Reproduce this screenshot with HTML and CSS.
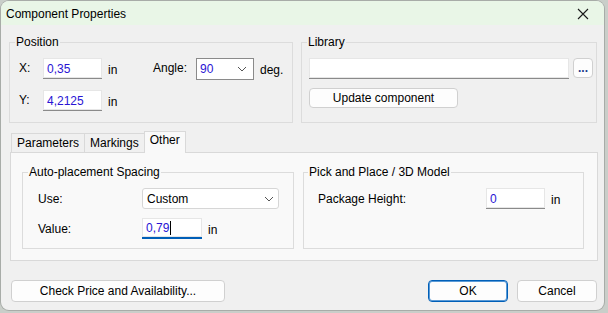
FILE: index.html
```html
<!DOCTYPE html>
<html lang="en">
<head>
    <meta charset="UTF-8">
    <title>Component Properties</title>
    <link rel="stylesheet" href="styles.css">
</head>
<body>
    <div class="window">
        <!-- Title bar -->
        <div class="titlebar">
            <span class="title">Component Properties</span>
            <svg class="close" width="12" height="12" viewBox="0 0 12 12">
                <path d="M1 1 L11 11 M11 1 L1 11" stroke="#1a1a1a" stroke-width="1.1"/>
            </svg>
        </div>

        <div class="content">
            <div class="top-row">
                <fieldset class="group group-position">
                    <legend>Position</legend>
                    <div class="pos-grid">
                        <span class="lbl">X:</span>
                        <input class="field" type="text" value="0,35">
                        <span class="unit">in</span>
                        <span class="lbl">Angle:</span>
                        <div class="combo">
                            <span class="combo-value">90</span>
                            <svg width="10" height="6" viewBox="0 0 10 6"><path d="M1 1 L5 5 L9 1" fill="none" stroke="#555" stroke-width="1"/></svg>
                        </div>
                        <span class="unit">deg.</span>

                        <span class="lbl">Y:</span>
                        <input class="field" type="text" value="4,2125">
                        <span class="unit">in</span>
                    </div>
                </fieldset>

                <fieldset class="group group-library">
                    <legend>Library</legend>
                    <div class="lib-body">
                        <div class="lib-row">
                            <input class="field lib-field" type="text" value="">
                            <button class="btn btn-dots">...</button>
                        </div>
                        <button class="btn btn-update">Update component</button>
                    </div>
                </fieldset>
            </div>

            <!-- Tabs -->
            <div class="tabs">
                <div class="tab">Parameters</div>
                <div class="tab">Markings</div>
                <div class="tab active">Other</div>
            </div>
            <div class="panel">
                <fieldset class="group group-spacing">
                    <legend>Auto-placement Spacing</legend>
                    <div class="spacing-body">
                        <div class="row">
                            <span class="row-lbl">Use:</span>
                            <div class="dropdown">
                                <span>Custom</span>
                                <svg width="10" height="6" viewBox="0 0 10 6"><path d="M1 1 L5 5 L9 1" fill="none" stroke="#555" stroke-width="1"/></svg>
                            </div>
                        </div>
                        <div class="row">
                            <span class="row-lbl">Value:</span>
                            <div class="field field-focus"><span class="val">0,79</span><span class="caret"></span></div>
                            <span class="unit">in</span>
                        </div>
                    </div>
                </fieldset>

                <fieldset class="group group-pick">
                    <legend>Pick and Place / 3D Model</legend>
                    <div class="pick-body">
                        <div class="row">
                            <span class="pick-lbl">Package Height:</span>
                            <input class="field" type="text" value="0">
                            <span class="unit">in</span>
                        </div>
                    </div>
                </fieldset>
            </div>

            <!-- Bottom buttons -->
            <div class="bottom">
                <button class="btn btn-price">Check Price and Availability...</button>
                <div class="bottom-right">
                    <button class="btn btn-ok">OK</button>
                    <button class="btn btn-cancel">Cancel</button>
                </div>
            </div>
        </div>
    </div>
</body>
</html>
```

FILE: styles.css
```css
/* General */
body {
    margin: 0;
    background-color: #c9cec9;
    font-family: "Liberation Sans", Arial, sans-serif;
    font-size: 12px;
    color: #000;
    width: 608px;
    height: 313px;
    overflow: hidden;
}

.window {
    margin: 1px 0 0 1px;
    width: 603px;
    height: 309px;
    background-color: #f0f0f0;
    border-radius: 8px;
    overflow: hidden;
    box-shadow: 0 0 0 1px #a8aca8;
}

/* Title bar */
.titlebar {
    height: 24px;
    background-color: #e9f6e7;
    display: flex;
    align-items: center;
    justify-content: space-between;
    padding: 0 15px 0 5px;
}

.title {
    font-size: 12px;
    margin-top: 1px;
}

.close {
    margin-top: 2px;
}

.content {
    padding: 0 7px 0 8px;
}

/* Group boxes */
.group {
    box-sizing: border-box;
    border: 1px solid #dcdcdc;
    margin: 0;
    padding: 0;
    min-width: 0;
}

.group legend {
    padding: 0 1px;
    margin-left: 5px;
    line-height: 16px;
}

.top-row {
    display: flex;
    gap: 8px;
    margin-top: 9px;
}

.group-position {
    width: 284px;
    height: 89px;
}

.group-library {
    width: 296px;
    height: 89px;
}

.pos-grid {
    display: grid;
    grid-template-columns: 24px 59px 51px 43px 58px auto;
    grid-template-rows: 21px 21px;
    row-gap: 11px;
    align-items: center;
    padding: 8px 0 0 9px;
}

.lib-body {
    padding: 8px 0 0 7px;
}

.lbl {
    padding-bottom: 2px;
}

.unit {
    padding-left: 6px;
    padding-top: 2px;
}

.field {
    box-sizing: border-box;
    width: 59px;
    height: 21px;
    border: none;
    border-bottom: 1px solid #8a8a8a;
    box-shadow: inset 0 0 0 1px #e6e6e6;
    background-color: #fff;
    font-family: inherit;
    font-size: 12px;
    color: #2a14d4;
    padding: 1px 0 0 4px;
    margin: 0;
    outline: none;
    display: flex;
    align-items: center;
}

.combo {
    box-sizing: border-box;
    height: 22px;
    border: 1px solid #8a8a8a;
    background-color: #fff;
    display: flex;
    align-items: center;
    justify-content: space-between;
    padding: 0 6px 0 3px;
    color: #2a14d4;
}

.lib-row {
    display: flex;
    gap: 4px;
}

.lib-field {
    width: 260px;
}

.btn {
    box-sizing: border-box;
    font-family: inherit;
    font-size: 12px;
    color: #000;
    background-color: #fdfdfd;
    border: 1px solid #d0d0d0;
    border-radius: 4px;
    padding: 0;
    margin: 0;
}

.btn-dots {
    width: 20px;
    height: 20px;
    color: #1a3a8a;
    font-weight: bold;
    line-height: 12px;
}

.btn-update {
    width: 149px;
    height: 20px;
    margin-top: 9px;
}

/* Tabs */
.tabs {
    display: flex;
    margin-top: 8px;
    height: 21px;
    align-items: flex-end;
    padding-left: 2px;
    position: relative;
    z-index: 1;
}

.tab {
    box-sizing: border-box;
    height: 19px;
    border: 1px solid #d9d9d9;
    border-bottom: none;
    padding: 1px 5px 0 5px;
    margin-right: -1px;
    background-color: #f0f0f0;
    line-height: 17px;
}

.tab.active {
    height: 22px;
    background-color: #f9f9f9;
    margin-bottom: -1px;
    padding-top: 0;
}

.panel {
    box-sizing: border-box;
    height: 109px;
    width: 588px;
    margin-left: 1px;
    border: 1px solid #d9d9d9;
    background-color: #f9f9f9;
    display: flex;
    gap: 9px;
    padding: 11px 0 0 11px;
}

.group-spacing {
    width: 272px;
    height: 85px;
}

.group-pick {
    width: 281px;
    height: 85px;
}

.spacing-body {
    padding: 8px 0 0 15px;
}

.pick-body {
    padding: 8px 0 0 14px;
}

.group-pick legend {
    margin-left: 4px;
}

.row {
    display: flex;
    align-items: center;
    height: 21px;
    margin-bottom: 9px;
}

.row-lbl {
    width: 104px;
}

.dropdown {
    box-sizing: border-box;
    width: 137px;
    height: 21px;
    background-color: #fff;
    border: 1px solid #d6d6d6;
    border-radius: 3px;
    display: flex;
    align-items: center;
    justify-content: space-between;
    padding: 0 4px 0 4px;
}

.field-focus {
    width: 60px;
    border-bottom: 2px solid #005fb8;
}

.caret {
    width: 1px;
    height: 14px;
    background-color: #000;
    margin-left: 1px;
}

.pick-lbl {
    width: 168px;
}

/* Bottom */
.bottom {
    display: flex;
    justify-content: space-between;
    margin-top: 19px;
    padding-left: 2px;
}

.btn-price {
    width: 214px;
    height: 22px;
}

.bottom-right {
    display: flex;
    gap: 9px;
}

.btn-ok,
.btn-cancel {
    width: 80px;
    height: 22px;
}

.btn-ok {
    border: 1px solid #005fb8;
    box-shadow: inset 0 0 0 1px #5a9ad6;
}
```
